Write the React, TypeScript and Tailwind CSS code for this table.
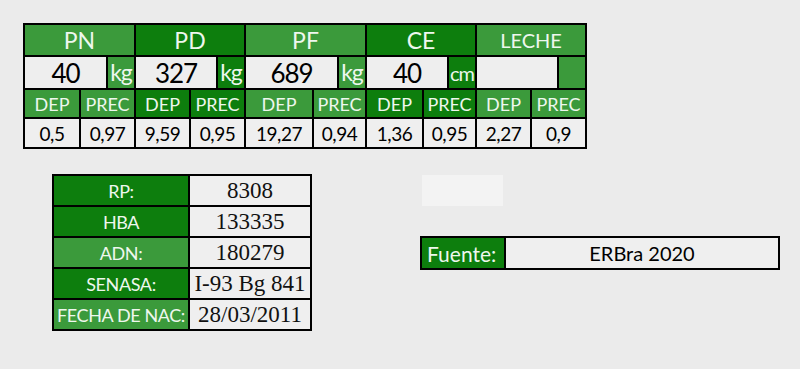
const L = "bg-[#3b9a3b]";
const D = "bg-[#0d7e0d]";

type Group = {
  name: string;
  width: string;
  dep: string;
  tone: "L" | "D";
  value: string;
  unit: string;
  d: string;
  p: string;
};

const groups: Group[] = [
  { name: "PN", width: "w-[109px]", dep: "w-[54px]", tone: "L", value: "40", unit: "kg", d: "0,5", p: "0,97" },
  { name: "PD", width: "w-[108px]", dep: "w-[53px]", tone: "D", value: "327", unit: "kg", d: "9,59", p: "0,95" },
  { name: "PF", width: "w-[119px]", dep: "w-[66px]", tone: "L", value: "689", unit: "kg", d: "19,27", p: "0,94" },
  { name: "CE", width: "w-[108px]", dep: "w-[55px]", tone: "D", value: "40", unit: "cm", d: "1,36", p: "0,95" },
  { name: "LECHE", width: "w-[108px]", dep: "w-[53px]", tone: "L", value: "", unit: "", d: "2,27", p: "0,9" },
];

const info: [string, string, "L" | "D"][] = [
  ["RP:", "8308", "D"],
  ["HBA", "133335", "D"],
  ["ADN:", "180279", "L"],
  ["SENASA:", "I-93 Bg 841", "D"],
  ["FECHA DE NAC:", "28/03/2011", "L"],
];

const sans = "font-['Lato','Open_Sans',sans-serif]";
const serif = "font-['Liberation_Serif',serif]";

function GroupCol({ g }: { g: Group }) {
  const bg = g.tone === "L" ? L : D;
  const head = g.name === "LECHE" ? "text-[20px]" : "text-[23px]";
  return (
    <div className={`${g.width} flex flex-col gap-[2px]`}>
      <div className={`${bg} h-[30px] flex items-center justify-center text-[#eef7ee] ${head} leading-none`}>{g.name}</div>
      <div className="h-[31px] flex gap-[2px]">
        <div className="flex-1 bg-[#eeeeee] flex items-center justify-center text-[26px] leading-none text-black tracking-[-1px]">{g.value}</div>
        <div className={`${bg} w-[26px] flex items-center justify-center ${g.unit === "kg" ? "text-[23px]" : "text-[20px]"} leading-none text-[#eef7ee] tracking-[-1px]`}>{g.unit}</div>
      </div>
      <div className="h-[27px] flex gap-[2px] text-[18px] leading-none text-[#eef7ee]">
        <div className={`${g.dep} ${bg} flex items-center justify-center`}>DEP</div>
        <div className={`flex-1 ${bg} flex items-center justify-center`}>PREC</div>
      </div>
      <div className="h-[28px] flex gap-[2px] text-[19px] leading-none text-black tracking-[-0.5px]">
        <div className={`${g.dep} bg-[#efefef] flex items-center justify-center`}>{g.d}</div>
        <div className="flex-1 bg-[#efefef] flex items-center justify-center">{g.p}</div>
      </div>
    </div>
  );
}

export default function App() {
  return (
    <div className={`w-[800px] h-[369px] bg-[#ebebeb] pt-[23px] pl-[23px] ${sans}`}>
      <div className="flex w-fit bg-black p-[2px] gap-[2px]">
        {groups.map((g) => (
          <GroupCol key={g.name} g={g} />
        ))}
      </div>

      <div className="flex mt-[25px]">
        <div className="ml-[29px] w-[260px] flex flex-col gap-[2px] bg-black p-[2px]">
          {info.map(([k, v, t]) => (
            <div key={k} className="flex gap-[2px] h-[29px]">
              <div className={`w-[134px] ${t === "L" ? L : D} flex items-center justify-center text-[18px] leading-none text-[#eef7ee] tracking-[-0.4px] whitespace-nowrap`}>{k}</div>
              <div className={`flex-1 bg-[#efefef] flex items-center justify-center text-[23px] leading-none text-[#111] ${serif}`}>{v}</div>
            </div>
          ))}
        </div>

        <div className="ml-[108px] flex flex-col">
          <div className="ml-[2px] mt-[1px] w-[81px] h-[31px] bg-[#f3f3f3]" />
          <div className="mt-[30px] w-[360px] h-[34px] flex gap-[2px] bg-black p-[2px]">
            <div className={`w-[82px] ${D} flex items-center pl-[5px] text-[21px] leading-none text-[#eef7ee]`}>Fuente:</div>
            <div className="flex-1 bg-[#efefef] flex items-center justify-center text-[20px] leading-none text-black">ERBra 2020</div>
          </div>
        </div>
      </div>
    </div>
  );
}
